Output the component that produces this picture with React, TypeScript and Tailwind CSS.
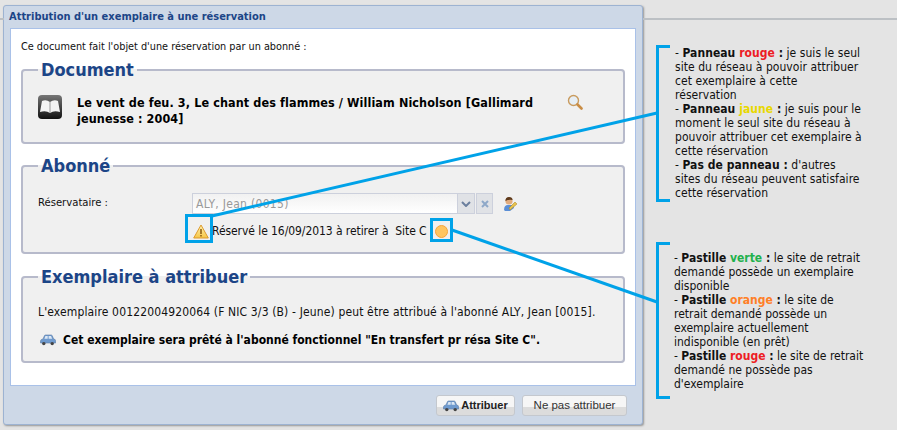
const font = "font-['DejaVu_Sans_Condensed','DejaVu_Sans',sans-serif]";

function Car({ className }: { className?: string }) {
  return (
    <svg viewBox="0 0 16 12" className={className}>
      <path d="M3 5 L4.5 1.5 Q4.8 1 5.5 1 H11 Q11.8 1 12.2 1.6 L13.6 5 Q15.5 5.3 15.7 6.5 V9 H0.5 V6.8 Q0.6 5.4 3 5 Z" fill="#6f9ace" stroke="#5a7aa5" strokeWidth="0.6" />
      <path d="M4.4 4.8 L5.4 2 H7.7 V4.8 Z M8.6 2 H11 L12.2 4.8 H8.6 Z" fill="#dbe7f4" />
      <circle cx="3.8" cy="9.6" r="1.7" fill="#444" />
      <circle cx="12.2" cy="9.6" r="1.7" fill="#444" />
    </svg>
  );
}

function Legend({ children }: { children: string }) {
  return <legend className="ml-[15px] px-[3px] text-[18px] leading-[22px] font-bold text-[#1c4587]">{children}</legend>;
}

function Bracket({ h }: { h: number }) {
  return (
    <svg width="14" height={h} className="shrink-0">
      <path d={`M14 1.5 H1.5 V${h - 1.5} H14`} fill="none" stroke="#00a2e8" strokeWidth="3" />
    </svg>
  );
}

function Note({ outer, inner, h, lines }: { outer: string; inner: string; h: number; lines: React.ReactNode[] }) {
  return (
    <div className={`flex ${outer}`}>
      <Bracket h={h} />
      <div className={`text-[12px] leading-[14px] text-[#111] whitespace-nowrap ${inner}`}>
        {lines.map((l, i) => (
          <div key={i}>{l}</div>
        ))}
      </div>
    </div>
  );
}

export default function App() {
  return (
    <div className={`relative h-[430px] w-[897px] overflow-hidden bg-[#e4e4e4] ${font} text-[12px] text-[#111]`}>
      <div className="absolute left-0 top-[18px] h-[2px] w-[4px] bg-[#bcc0c4]" />
      <div className="absolute left-[643px] right-0 top-[18px] h-[2px] bg-[#bcc0c4]" />

      <div className="flex items-start">
        {/* Window */}
        <div className="ml-[3px] mt-[5px] flex h-[420px] w-[640px] flex-col rounded-[3px] border border-[#9db3d2] bg-[#cdd8e7] shadow-[1px_1px_2px_rgba(0,0,0,0.35)]">
          <div className="flex h-[22px] items-center pl-[5px] text-[11px] font-bold text-[#1c4587]">
            Attribution d'un exemplaire à une réservation
          </div>
          <div className="mx-[6px] flex h-[358px] flex-col border border-[#a9c1e8] bg-white px-[10px] pt-[10px]">
            <p className="h-[18px] text-[10.8px] leading-[16px]">Ce document fait l'objet d'une réservation par un abonné :</p>

            <fieldset className="mt-[2px] h-[85px] rounded-[4px] border-2 border-[#b7bacb] bg-[#f0f0f0]">
              <Legend>Document</Legend>
              <div className="flex items-start pl-[15px] pt-[14px]">
                <svg viewBox="0 0 24 24" className="h-[24px] w-[24px] shrink-0">
                  <defs>
                    <linearGradient id="bk" x1="0" y1="0" x2="0" y2="1">
                      <stop offset="0" stopColor="#777" />
                      <stop offset="1" stopColor="#111" />
                    </linearGradient>
                  </defs>
                  <rect x="0" y="0" width="24" height="24" rx="4" fill="url(#bk)" />
                  <path d="M4 6 Q8 4 12 7 Q16 4 20 6 L22 17 Q16 15 12 18 Q8 15 2 17 Z" fill="#f4f4f4" />
                  <path d="M12 7 V18" stroke="#999" strokeWidth="1" />
                </svg>
                <div className="ml-[15px] w-[470px] text-[12.5px] leading-[16px] font-bold tracking-[0.1px] text-black">
                  Le vent de feu. 3, Le chant des flammes / William Nicholson [Gallimard jeunesse : 2004]
                </div>
                <svg viewBox="0 0 16 16" className="ml-[20px] mt-[-1px] h-[16px] w-[16px] shrink-0">
                  <circle cx="6.5" cy="6.5" r="5" fill="#e6eef5" stroke="#c99b5e" strokeWidth="1.4" />
                  <path d="M10.5 10.5 L14.5 14.5" stroke="#c98d45" strokeWidth="2.6" strokeLinecap="round" />
                </svg>
              </div>
            </fieldset>

            <fieldset className="mt-[11px] h-[99px] rounded-[4px] border-2 border-[#b7bacb] bg-[#f0f0f0]">
              <Legend>Abonné</Legend>
              <div className="flex items-center pl-[15px] pt-[16px]">
                <span className="w-[154px] text-[11.2px]">Réservataire :</span>
                <div className="flex h-[21px] w-[266px] items-center border border-[#ccd0dc] bg-gradient-to-b from-[#f1f1f1] to-white pl-[3px] tracking-[0.3px] text-[#999]">
                  ALY, Jean (0015)
                </div>
                <div className="flex h-[21px] w-[17px] items-center justify-center border border-l-0 border-[#ccd0dc] bg-[#e0e2e6]">
                  <svg viewBox="0 0 10 6" className="h-[6px] w-[10px]">
                    <path d="M1 1 L5 5 L9 1" fill="none" stroke="#6b7f9e" strokeWidth="2" />
                  </svg>
                </div>
                <div className="ml-[1px] flex h-[21px] w-[17px] items-center justify-center border border-[#ccd0dc] bg-[#e0e2e6]">
                  <svg viewBox="0 0 8 8" className="h-[8px] w-[8px]">
                    <path d="M1 1 L7 7 M7 1 L1 7" stroke="#8ea8c8" strokeWidth="2" />
                  </svg>
                </div>
                <svg viewBox="0 0 16 16" className="ml-[9px] h-[16px] w-[16px] shrink-0">
                  <path d="M2 14 Q2 9 6 9 H10 Q12 9 12 12 L8 15 H3 Z" fill="#5b8fd6" />
                  <circle cx="7" cy="5" r="3.6" fill="#e2ab7c" />
                  <path d="M3.4 5 Q3.5 1 7 1 Q10.5 1 10.6 4 Q7 3 3.4 5 Z" fill="#5e3a1c" />
                  <path d="M8 14 L15 8 L13 6 L7 12 Z" fill="#e8c24c" stroke="#a58020" strokeWidth="0.5" />
                </svg>
              </div>
              <div className="flex items-center pl-[170px] pt-[8px]">
                <svg viewBox="0 0 16 15" className="h-[15px] w-[16px] shrink-0">
                  <defs>
                    <linearGradient id="wr" x1="0" y1="0" x2="0" y2="1">
                      <stop offset="0" stopColor="#fff2b0" />
                      <stop offset="1" stopColor="#f6c545" />
                    </linearGradient>
                  </defs>
                  <path d="M8 1 L15.3 14 H0.7 Z" fill="url(#wr)" stroke="#dd9a2c" strokeWidth="1" strokeLinejoin="round" />
                  <path d="M8 5 V10" stroke="#8a5a10" strokeWidth="1.5" />
                  <path d="M8 11 V12.6" stroke="#8a5a10" strokeWidth="1.5" />
                </svg>
                <span className="ml-[3px] tracking-[-0.07px]">Réservé le 16/09/2013 à retirer à&nbsp; Site C</span>
                <span className="ml-[8px] h-[13px] w-[13px] rounded-full border border-[#f5a43c] bg-[#ffc560]" />
              </div>
            </fieldset>

            <fieldset className="mt-[12px] h-[97px] rounded-[4px] border-2 border-[#b7bacb] bg-[#f0f0f0]">
              <Legend>Exemplaire à attribuer</Legend>
              <p className="pl-[15px] pt-[16px] leading-[16px] tracking-[0.14px]">
                L'exemplaire 00122004920064 (F NIC 3/3 (B) - Jeune) peut être attribué à l'abonné ALY, Jean [0015].
              </p>
              <div className="flex items-center pl-[17px] pt-[12px]">
                <Car className="h-[12px] w-[16px] shrink-0" />
                <span className="ml-[7px] text-[12px] leading-[16px] font-bold text-black">
                  Cet exemplaire sera prêté à l'abonné fonctionnel "En transfert pr résa Site C".
                </span>
              </div>
            </fieldset>
          </div>
          <div className="flex flex-1 items-start justify-end gap-[7px] pr-[15px] pt-[9px] font-['Liberation_Sans',sans-serif] text-[11.5px]">
            <button className="flex h-[21px] w-[79px] items-center justify-center gap-[2px] rounded-[3px] border border-[#c4c8ce] bg-gradient-to-b from-[#f6f6f6] from-60% to-[#dcdcdc] to-60% text-[11px] font-bold text-[#222]">
              <Car className="h-[12px] w-[16px] shrink-0" />
              Attribuer
            </button>
            <button className="flex h-[21px] w-[105px] items-center justify-center rounded-[3px] border border-[#c4c8ce] bg-gradient-to-b from-[#f6f6f6] from-60% to-[#dcdcdc] to-60% text-[#333]">
              Ne pas attribuer
            </button>
          </div>
        </div>

        {/* Notes */}
        <div className="ml-[13px] flex flex-col">
          <Note
            outer="mt-[45px]"
            inner="ml-[5px] pt-[1px] tracking-[0.05px]"
            h={157}
            lines={[
              <>- <b>Panneau <span className="text-[#ed1c24]">rouge</span> :</b> je suis le seul</>,
              "site du réseau à pouvoir attribuer",
              "cet exemplaire à cette",
              "réservation",
              <>- <b>Panneau <span className="text-[#e8d800]">jaune</span> :</b> je suis pour le</>,
              "moment le seul site du réseau à",
              "pouvoir attribuer cet exemplaire à",
              "cette réservation",
              <>- <b>Pas de panneau :</b> d'autres</>,
              "sites du réseau peuvent satisfaire",
              "cette réservation",
            ]}
          />
          <Note
            outer="mt-[40px]"
            inner="ml-[4px] pt-[9px]"
            h={157}
            lines={[
              <>- <b>Pastille <span className="text-[#22b14c]">verte</span> :</b> le site de retrait</>,
              "demandé possède un exemplaire",
              "disponible",
              <>- <b>Pastille <span className="text-[#ff7f27]">orange</span> :</b> le site de</>,
              "retrait demandé possède un",
              "exemplaire actuellement",
              "indisponible (en prêt)",
              <>- <b>Pastille <span className="text-[#ed1c24]">rouge</span> :</b> le site de retrait</>,
              "demandé ne possède pas",
              "d'exemplaire",
            ]}
          />
        </div>
      </div>

      {/* Callouts drawn over the screenshot */}
      <svg width="897" height="430" className="pointer-events-none absolute left-0 top-0">
        <rect x="186.5" y="215.5" width="25" height="26" fill="none" stroke="#00a2e8" strokeWidth="3" />
        <rect x="431.5" y="219.5" width="20" height="21" fill="none" stroke="#00a2e8" strokeWidth="3" />
        <path d="M212 216 L657 113" stroke="#00a2e8" strokeWidth="3" />
        <path d="M452 230 L657 302" stroke="#00a2e8" strokeWidth="3" />
      </svg>
    </div>
  );
}
